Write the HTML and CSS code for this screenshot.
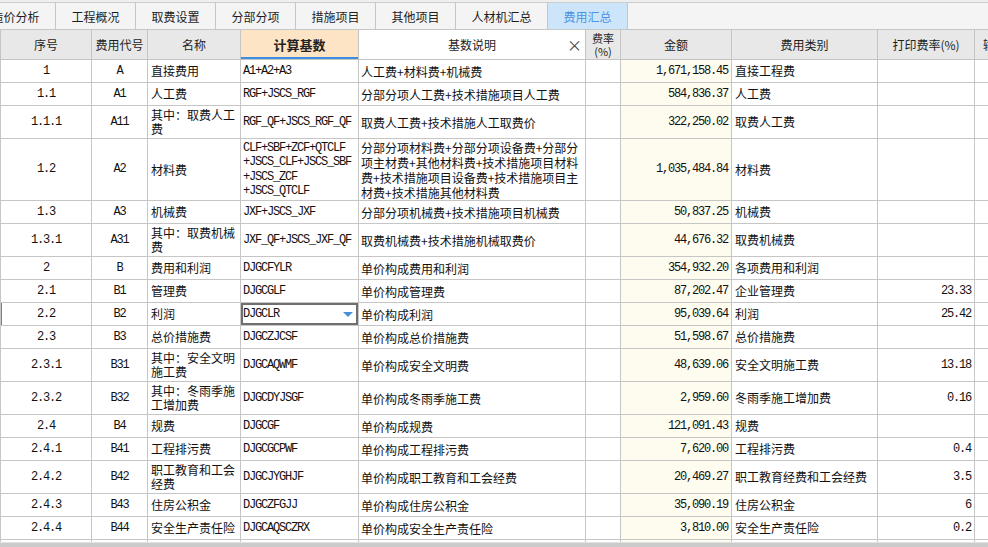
FILE: index.html
```html
<!DOCTYPE html>
<html lang="zh-CN">
<head>
<meta charset="utf-8">
<title>费用汇总</title>
<link rel="stylesheet" href="styles.css">
</head>
<body>
<div class="app">
  <div class="tabbar">
    <div class="tabs">
      <div class="tab">造价分析</div>
      <div class="tab">工程概况</div>
      <div class="tab">取费设置</div>
      <div class="tab">分部分项</div>
      <div class="tab">措施项目</div>
      <div class="tab">其他项目</div>
      <div class="tab wide">人材机汇总</div>
      <div class="tab active">费用汇总</div>
    </div>
  </div>
  <div class="grid-wrap">
    <table class="grid">
      <colgroup>
        <col class="c-no"><col class="c-code"><col class="c-name"><col class="c-base"><col class="c-desc"><col class="c-rate"><col class="c-amt"><col class="c-type"><col class="c-prate"><col class="c-out">
      </colgroup>
      <thead>
        <tr>
          <th>序号</th>
          <th>费用代号</th>
          <th>名称</th>
          <th class="th-base">计算基数</th>
          <th class="th-desc"><div class="th-desc-in"><span></span><span>基数说明</span><span class="close">×</span></div></th>
          <th class="th-rate"><div class="rate-in"><span>费率</span><span>(%)</span></div></th>
          <th>金额</th>
          <th>费用类别</th>
          <th>打印费率(%)</th>
          <th class="th-out">输出</th>
        </tr>
      </thead>
      <tbody>
        <tr class="h1"><td class="no">1</td><td class="cd">A</td><td class="nm">直接费用</td><td class="base">A1+A2+A3</td><td class="desc">人工费+材料费+机械费</td><td></td><td class="amt">1,671,158.45</td><td class="nm">直接工程费</td><td class="pr"></td><td></td></tr>
        <tr class="h1"><td class="no">1.1</td><td class="cd">A1</td><td class="nm">人工费</td><td class="base">RGF+JSCS_RGF</td><td class="desc">分部分项人工费+技术措施项目人工费</td><td></td><td class="amt">584,836.37</td><td class="nm">人工费</td><td class="pr"></td><td></td></tr>
        <tr class="h2"><td class="no">1.1.1</td><td class="cd">A11</td><td class="nm">其中：取费人工费</td><td class="base">RGF_QF+JSCS_RGF_QF</td><td class="desc">取费人工费+技术措施人工取费价</td><td></td><td class="amt">322,250.02</td><td class="nm">取费人工费</td><td class="pr"></td><td></td></tr>
        <tr class="h4"><td class="no">1.2</td><td class="cd">A2</td><td class="nm">材料费</td><td class="base">CLF+SBF+ZCF+QTCLF<br>+JSCS_CLF+JSCS_SBF<br>+JSCS_ZCF<br>+JSCS_QTCLF</td><td class="desc">分部分项材料费+分部分项设备费+分部分<br>项主材费+其他材料费+技术措施项目材料<br>费+技术措施项目设备费+技术措施项目主<br>材费+技术措施其他材料费</td><td></td><td class="amt">1,035,484.84</td><td class="nm">材料费</td><td class="pr"></td><td></td></tr>
        <tr class="h1"><td class="no">1.3</td><td class="cd">A3</td><td class="nm">机械费</td><td class="base">JXF+JSCS_JXF</td><td class="desc">分部分项机械费+技术措施项目机械费</td><td></td><td class="amt">50,837.25</td><td class="nm">机械费</td><td class="pr"></td><td></td></tr>
        <tr class="h2"><td class="no">1.3.1</td><td class="cd">A31</td><td class="nm">其中：取费机械费</td><td class="base">JXF_QF+JSCS_JXF_QF</td><td class="desc">取费机械费+技术措施机械取费价</td><td></td><td class="amt">44,676.32</td><td class="nm">取费机械费</td><td class="pr"></td><td></td></tr>
        <tr class="h1"><td class="no">2</td><td class="cd">B</td><td class="nm">费用和利润</td><td class="base">DJGCFYLR</td><td class="desc">单价构成费用和利润</td><td></td><td class="amt">354,932.20</td><td class="nm">各项费用和利润</td><td class="pr"></td><td></td></tr>
        <tr class="h1"><td class="no">2.1</td><td class="cd">B1</td><td class="nm">管理费</td><td class="base">DJGCGLF</td><td class="desc">单价构成管理费</td><td></td><td class="amt">87,202.47</td><td class="nm">企业管理费</td><td class="pr">23.33</td><td></td></tr>
        <tr class="h1 current"><td class="no sel">2.2</td><td class="cd">B2</td><td class="nm">利润</td><td class="base editing"><div class="editor"><span>DJGCLR</span><span class="caret"></span></div></td><td class="desc">单价构成利润</td><td></td><td class="amt">95,039.64</td><td class="nm">利润</td><td class="pr">25.42</td><td></td></tr>
        <tr class="h1"><td class="no">2.3</td><td class="cd">B3</td><td class="nm">总价措施费</td><td class="base">DJGCZJCSF</td><td class="desc">单价构成总价措施费</td><td></td><td class="amt">51,598.67</td><td class="nm">总价措施费</td><td class="pr"></td><td></td></tr>
        <tr class="h2"><td class="no">2.3.1</td><td class="cd">B31</td><td class="nm">其中：安全文明施工费</td><td class="base">DJGCAQWMF</td><td class="desc">单价构成安全文明费</td><td></td><td class="amt">48,639.06</td><td class="nm">安全文明施工费</td><td class="pr">13.18</td><td></td></tr>
        <tr class="h2"><td class="no">2.3.2</td><td class="cd">B32</td><td class="nm">其中：冬雨季施工增加费</td><td class="base">DJGCDYJSGF</td><td class="desc">单价构成冬雨季施工费</td><td></td><td class="amt">2,959.60</td><td class="nm">冬雨季施工增加费</td><td class="pr">0.16</td><td></td></tr>
        <tr class="h1"><td class="no">2.4</td><td class="cd">B4</td><td class="nm">规费</td><td class="base">DJGCGF</td><td class="desc">单价构成规费</td><td></td><td class="amt">121,091.43</td><td class="nm">规费</td><td class="pr"></td><td></td></tr>
        <tr class="h1"><td class="no">2.4.1</td><td class="cd">B41</td><td class="nm">工程排污费</td><td class="base">DJGCGCPWF</td><td class="desc">单价构成工程排污费</td><td></td><td class="amt">7,620.00</td><td class="nm">工程排污费</td><td class="pr">0.4</td><td></td></tr>
        <tr class="h2"><td class="no">2.4.2</td><td class="cd">B42</td><td class="nm">职工教育和工会经费</td><td class="base">DJGCJYGHJF</td><td class="desc">单价构成职工教育和工会经费</td><td></td><td class="amt">20,469.27</td><td class="nm">职工教育经费和工会经费</td><td class="pr">3.5</td><td></td></tr>
        <tr class="h1"><td class="no">2.4.3</td><td class="cd">B43</td><td class="nm">住房公积金</td><td class="base">DJGCZFGJJ</td><td class="desc">单价构成住房公积金</td><td></td><td class="amt">35,090.19</td><td class="nm">住房公积金</td><td class="pr">6</td><td></td></tr>
        <tr class="h1"><td class="no">2.4.4</td><td class="cd">B44</td><td class="nm">安全生产责任险</td><td class="base">DJGCAQSCZRX</td><td class="desc">单价构成安全生产责任险</td><td></td><td class="amt">3,810.00</td><td class="nm">安全生产责任险</td><td class="pr">0.2</td><td></td></tr>
        <tr class="h1"><td class="no"></td><td class="cd"></td><td class="nm"></td><td class="base"></td><td class="desc"></td><td></td><td class="amt"></td><td class="nm"></td><td class="pr"></td><td></td></tr>
      </tbody>
    </table>
  </div>
  <div class="hscroll"></div>
</div>
</body>
</html>
```

FILE: styles.css
```css
html, body {
  margin: 0;
  padding: 0;
}
body {
  width: 988px;
  height: 547px;
  overflow: hidden;
  background: #ffffff;
  font-family: "Noto Sans CJK SC", "Microsoft YaHei", sans-serif;
  font-size: 12px;
  color: #1a1a1a;
}
.app {
  display: flex;
  flex-direction: column;
  height: 547px;
}
.tabbar {
  flex: none;
  height: 30px;
  box-sizing: border-box;
  padding-top: 2px;
  background: #eeeeee;
  border-bottom: 1px solid #c6c6c6;
  overflow: hidden;
}
.tabs {
  display: flex;
  height: 27px;
  margin-left: -24px;
  border-top: 1px solid #cdcdcd;
  background: #f4f4f4;
}
.tab {
  flex: none;
  width: 80px;
  box-sizing: border-box;
  border-right: 1px solid #c6c6c6;
  display: flex;
  align-items: center;
  justify-content: center;
  font-size: 12px;
  color: #1e1e1e;
  background: #f4f4f4;
}
.tab.wide {
  width: 92px;
}
.tab.active {
  background: #cce5fa;
  color: #4b94de;
}
.grid-wrap {
  flex: 1;
  overflow: hidden;
}
.grid {
  border-collapse: collapse;
  table-layout: fixed;
  width: 1015px;
}
.c-no { width: 91px; }
.c-code { width: 56px; }
.c-name { width: 93px; }
.c-base { width: 118px; }
.c-desc { width: 227px; }
.c-rate { width: 35px; }
.c-amt { width: 111px; }
.c-type { width: 146px; }
.c-prate { width: 97px; }
.c-out { width: 41px; }

.grid th {
  height: 29px;
  padding: 0;
  background: #e8e8e8;
  border: 1px solid #c4c4c4;
  border-top: none;
  font-weight: normal;
  font-size: 12px;
  color: #1e1e1e;
  text-align: center;
  vertical-align: middle;
  white-space: nowrap;
  overflow: hidden;
}
.grid th.th-base {
  background: #fde4c5;
  font-weight: bold;
  font-size: 13px;
  color: #222;
  box-shadow: inset 0 -2px 0 #3d8de2;
}
.grid th.th-desc {
  background: #ffffff;
}
.th-desc-in {
  display: grid;
  grid-template-columns: 1fr auto 1fr;
  align-items: center;
}
.close {
  justify-self: end;
  margin-right: 3px;
  font-size: 15px;
  color: #444;
  line-height: 1;
}
.rate-in {
  display: flex;
  flex-direction: column;
  align-items: center;
  font-size: 11px;
  line-height: 13px;
}
.grid th.th-out {
  text-align: left;
  padding-left: 8px;
}
.grid td {
  padding: 0 3px;
  border: 1px solid #c6c6c6;
  vertical-align: middle;
  line-height: 15px;
  font-size: 12px;
  color: #111;
  overflow: hidden;
}
.grid tr.h1 td { height: 22px; }
.grid tr.h2 td { height: 32px; }
.grid tr.h4 td { height: 61px; }

.grid td.no,
.grid td.cd {
  text-align: center;
  font-family: "Liberation Mono", "DejaVu Sans Mono", monospace;
  letter-spacing: -1.2px;
  white-space: nowrap;
}
.grid td.nm {
  padding-left: 3px;
  padding-right: 2px;
  line-height: 14px;
}
.grid td.base {
  font-family: "Liberation Mono", "DejaVu Sans Mono", monospace;
  letter-spacing: -1.2px;
  white-space: nowrap;
  padding-left: 2px;
  line-height: 14.5px;
}
.grid td.desc {
  padding-left: 2px;
  white-space: nowrap;
  line-height: 15px;
}
.grid td.amt {
  background: #fefcef;
  text-align: right;
  padding-right: 3px;
  font-family: "Liberation Mono", "DejaVu Sans Mono", monospace;
  letter-spacing: -1.2px;
  white-space: nowrap;
}
.grid td.pr {
  text-align: right;
  padding-right: 3px;
  font-family: "Liberation Mono", "DejaVu Sans Mono", monospace;
  letter-spacing: -1.2px;
  white-space: nowrap;
}
.grid td.sel {
  box-shadow: inset 1px 0 0 #3a8ee6;
}
.grid td.editing {
  padding: 0;
}
.editor {
  display: flex;
  align-items: center;
  justify-content: space-between;
  height: 22px;
  box-sizing: border-box;
  padding: 0 5px 0 2px;
  box-shadow: inset 0 0 0 2px #6f6f6f;
}
.caret {
  width: 0;
  height: 0;
  border-left: 5px solid transparent;
  border-right: 5px solid transparent;
  border-top: 5px solid #4a90d4;
}
.hscroll {
  flex: none;
  height: 4px;
  background: #cbcbcb;
  border-top: 1px solid #e2e2e2;
}
```
